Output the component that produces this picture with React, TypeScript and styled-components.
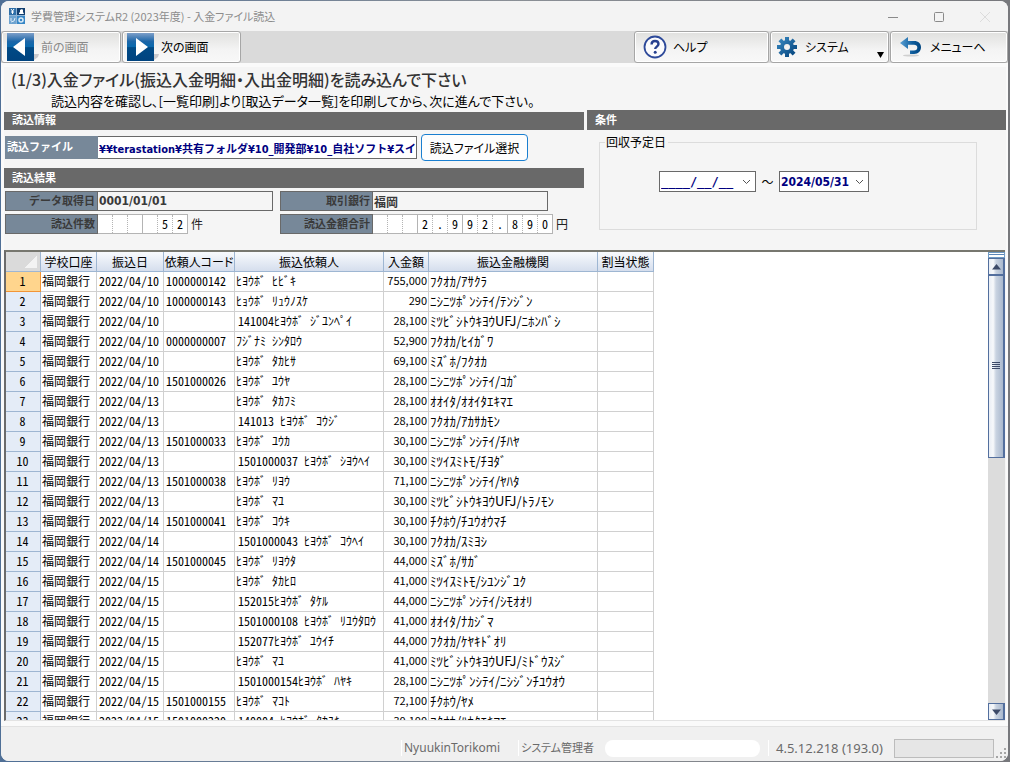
import React from "react";
import styled, { createGlobalStyle, css } from "styled-components";

const kana = `"Noto Sans CJK JP", sans-serif`;
const wide = `"DejaVu Sans Condensed", "Noto Sans CJK JP", sans-serif`;
const mono = `"DejaVu Sans Mono", monospace`;

const Global = createGlobalStyle`
  * { box-sizing: border-box; }
  body { margin: 0; background: #5f7393; font-family: ${kana}; font-size: 12px; color: #000; }
  button, input { font: inherit; color: inherit; margin: 0; }
  h1, h2, p { margin: 0; font-weight: 400; }
`;

const Frame = styled.div`
  height: 100vh;
  min-height: 480px;
  padding: 1px 2px 1px 1px;
  background: linear-gradient(90deg, #4f6f96, #8a8f96 50%, #77787c);
`;

const Window = styled.div`
  height: 100%;
  display: flex;
  flex-direction: column;
  overflow: hidden;
  border-radius: 8px;
  background: #fafafa;
`;

const TitleBar = styled.header`
  display: flex;
  align-items: center;
  height: 30px;
  flex: none;
  padding-left: 8px;
  background: #f3f3f3;
  color: #8c8c8c;
`;

const Caption = styled.h1`
  flex: 1;
  margin-left: 6px;
  font-size: 11px;
  line-height: 16px;
  font-feature-settings: "palt";
`;

const WindowButton = styled.button<{ $faint?: boolean }>`
  width: 46px;
  height: 30px;
  padding: 0;
  border: 0;
  background: none;
  color: ${(p) => (p.$faint ? "#dcdcdc" : "#8a8a8a")};
`;

const Toolbar = styled.nav`
  display: flex;
  gap: 1px;
  height: 32px;
  flex: none;
  background: #dadada;
`;

const ToolButton = styled.button<{ $width: number; $gap: number; $pad: number }>`
  display: flex;
  align-items: center;
  gap: ${(p) => p.$gap}px;
  width: ${(p) => p.$width}px;
  height: 32px;
  padding: 0 8px 0 ${(p) => p.$pad}px;
  border: 1px solid #a6a6a6;
  border-radius: 3px;
  box-shadow: inset 0 0 0 1px #fff;
  background: linear-gradient(#e0e0de, #f4f4f4 60%, #f8f8f8);
  font-size: 12px;
  line-height: 20px;
  font-feature-settings: "palt";
  white-space: nowrap;
  &:disabled { color: #8a8a8a; }
`;

const Spacer = styled.div`
  flex: 1;
`;

const DropMark = styled.svg`
  margin-left: auto;
  align-self: flex-end;
  margin-bottom: 4px;
  margin-right: -4px;
`;

const Page = styled.main`
  flex: 1;
  min-height: 0;
  display: flex;
  flex-direction: column;
  margin: 4px 2px 0 3px;
  background: #f5f5f5;
`;

const Heading = styled.h2`
  padding: 1px 0 0 7px;
  font-size: 16px;
  line-height: 23px;
  color: #333;
  font-weight: 500;
  font-feature-settings: "palt";
`;

const Lead = styled.p`
  padding-left: 47px;
  font-size: 13px;
  line-height: 19px;
  font-feature-settings: "palt";
`;

const Panels = styled.div`
  display: grid;
  grid-template-columns: 580px 1fr;
  gap: 3px;
  height: 140px;
  flex: none;
`;

const Left = styled.section`
  display: flex;
  flex-direction: column;
  padding-top: 2px;
`;

const Band = styled.h2<{ $tall?: boolean }>`
  height: ${(p) => (p.$tall ? 20 : 18)}px;
  padding-left: 8px;
  background: #696969;
  color: #fff;
  font-size: 11px;
  font-weight: 700;
  line-height: ${(p) => (p.$tall ? 18 : 14)}px;
`;

const FileRow = styled.div`
  display: flex;
  align-items: center;
  padding: 4px 1px 7px;
`;

const FileLabel = styled.label`
  width: 93px;
  height: 23px;
  padding-left: 2px;
  background: #778899;
  color: #fff;
  font-size: 11px;
  font-weight: 700;
  line-height: 20px;
`;

const FileInput = styled.input`
  width: 319px;
  height: 23px;
  padding: 0 1px;
  border: 1px solid #696969;
  border-left: 0;
  background: #fff;
  color: #000080;
  font-family: ${wide};
  font-size: 11px;
  font-weight: 700;
`;

const PickButton = styled.button`
  width: 107px;
  height: 27px;
  margin-left: 4px;
  padding: 0;
  border: 1px solid #1a7fd0;
  border-radius: 4px;
  background: #fdfdfd;
  font-size: 12px;
  font-feature-settings: "palt";
  white-space: nowrap;
`;

const Results = styled.div`
  display: grid;
  grid-template-columns: 275px 1fr;
  row-gap: 3px;
  padding: 3px 1px;
`;

const Result = styled.div`
  display: flex;
  height: 20px;
`;

const ResultLabel = styled.label`
  width: 93px;
  padding-right: 2px;
  border: 1px solid #696969;
  background: #778899;
  color: #3a3a3a;
  font-size: 11px;
  font-weight: 700;
  line-height: 16px;
  text-align: right;
`;

const ResultInput = styled.input`
  width: 175px;
  padding: 0 1px;
  border: 1px solid #696969;
  border-left: 0;
  background: #f5f5f5;
  color: #3a3a3a;
  font-family: ${wide};
  font-size: 12px;
  font-weight: 700;
`;

const Comb = styled.output`
  display: flex;
  border: solid #b4b4b4;
  border-width: 1px 1px 1px 0;
  background: #fff;
`;

const Digit = styled.span<{ $solid: boolean; $last: boolean }>`
  width: ${(p) => (p.$last ? 14 : 15)}px;
  border-right: ${(p) => (p.$last ? "0" : p.$solid ? "1px solid #b4b4b4" : "1px dotted #b4b4b4")};
  font-size: 12px;
  line-height: 17px;
  text-align: center;
  font-feature-settings: "hwid";
`;

const Unit = styled.span`
  margin-left: 3px;
  font-size: 12px;
  line-height: 19px;
  color: #222;
`;

const Dates = styled.fieldset`
  display: flex;
  align-items: center;
  height: 96px;
  margin: 4px 29px 0 12px;
  padding: 0 0 16px 59px;
  border: 1px solid #dcdcdc;
  legend {
    margin-left: -54px;
    padding: 0 2px 0 1px;
    font-size: 12px;
    line-height: 16px;
  }
`;

const Tilde = styled.span`
  width: 23px;
  text-align: center;
  font-size: 12px;
`;

const DateBox = styled.div<{ $width: number; $blank?: boolean }>`
  display: flex;
  width: ${(p) => p.$width}px;
  height: 21px;
  border: 1px solid #696969;
  background: #fff;
  input {
    flex: 1;
    min-width: 0;
    padding: 0 1px;
    border: 0;
    background: none;
    color: #000080;
    font-family: ${(p) => (p.$blank ? mono : wide)};
    font-size: 12px;
    font-weight: 700;
  }
  button {
    width: 18px;
    padding: 0;
    border: 0;
    background: none;
    line-height: 0;
  }
`;

const Sheet = styled.section`
  flex: 1;
  min-height: 0;
  display: flex;
  overflow: hidden;
  margin-right: 1px;
  border: solid #6b6b6b;
  border-width: 2px 0 0 2px;
  border-top-color: #77776f;
  border-bottom: 1px solid #e3e3e3;
  background: #fff;
`;

const TableBox = styled.div`
  flex: 1;
  min-width: 0;
  overflow: hidden;
`;

const Table = styled.table`
  width: 648px;
  table-layout: fixed;
  border-collapse: separate;
  border-spacing: 0;
  line-height: 17px;
`;

const edge = css`
  height: 20px;
  padding: 0 2px 2px 1px;
  border: solid #d0d0d0;
  border-width: 0 1px 1px 0;
  overflow: hidden;
  white-space: pre;
`;

const HeadCell = styled.th`
  ${edge}
  padding: 0;
  border-color: #9eb6d2;
  background: linear-gradient(#f8fafd, #d5deed);
  font-size: 12px;
  font-weight: 400;
  font-feature-settings: "palt";
`;

const Corner = styled(HeadCell)`
  background: linear-gradient(135deg, transparent 50%, #f3f3f3 50%) 18px 4px / 13px 12px no-repeat, #dadada;
`;

const RowHead = styled.th<{ $active: boolean }>`
  ${edge}
  border-color: ${(p) => (p.$active ? "#f29536" : "#9eb6d2")};
  background: ${(p) => (p.$active ? "#ffd58d" : "#e4ecf7")};
  font-size: 12px;
  font-weight: 400;
  font-feature-settings: "hwid";
`;

const Cell = styled.td`
  ${edge}
  font-size: 12px;
`;

const CodeCell = styled(Cell)`
  padding-left: 2px;
  font-feature-settings: "hwid";
`;

const NameCell = styled(Cell)<{ $indent: boolean }>`
  padding-left: ${(p) => (p.$indent ? 3 : 1)}px;
  font-feature-settings: "hwid";
`;

const AmountCell = styled(Cell)`
  padding-right: 1px;
  font-size: 11px;
  text-align: right;
`;

const BankCell = styled(Cell)`
  font-size: 13px;
`;

const Scroll = styled.div`
  width: 17px;
  flex: none;
  display: flex;
  flex-direction: column;
  background: #dcdcdc;
`;

const steel = css`
  flex: none;
  border: 1px solid #536f9e;
  border-right-width: 2px;
  background: linear-gradient(90deg, #e9eef5, #f7f9fb 30%, #c9d3e1 50%, #a9b8cd);
`;

const SplitGrip = styled.div`
  flex: none;
  height: 6px;
  border: 1px solid #6f9ac4;
  background: linear-gradient(#fff 1px, #5b86b8 1px 2px, #fff 2px);
`;

const ArrowButton = styled.button`
  ${steel}
  height: 17px;
  padding: 0;
  line-height: 0;
`;

const Thumb = styled.div`
  ${steel}
  display: flex;
  align-items: center;
  justify-content: center;
  height: 39%;
`;

const StatusBar = styled.footer`
  display: flex;
  align-items: center;
  height: 35px;
  flex: none;
  margin-top: 5px;
  padding-top: 8px;
  border-top: 1px solid #e2e2e2;
  background: #f0f0f0;
  color: #6a6a6a;
  font-family: "Noto Sans", "Noto Sans CJK JP", sans-serif;
  line-height: 16px;
  white-space: nowrap;
`;

const StatusItem = styled.span<{ $width: number; $size: number; $pad: number }>`
  width: ${(p) => p.$width}px;
  padding-left: ${(p) => p.$pad}px;
  border-left: 1px solid #fff;
  font-size: ${(p) => p.$size}px;
  font-feature-settings: "palt";
`;

const Blank = styled.span`
  width: 155px;
  height: 17px;
  margin-right: 8px;
  border-radius: 8px;
  background: #fff;
`;

const Progress = styled.div`
  width: 100px;
  height: 19px;
  border: 1px solid #bcbcbc;
  background: #e6e6e6;
`;

const Grip = styled.svg`
  align-self: flex-end;
  margin: 0 1px 2px 2px;
`;

const AppIcon = () => (
  <svg width="16" height="16" viewBox="0 0 16 16" aria-hidden="true">
    <path d="M0 0h7v7H0z" fill="#2f6fa8" />
    <path d="M8 0h8v7H8z" fill="#123f70" />
    <path d="M0 8h7v8H0z" fill="#6ea3d0" />
    <path d="M8 8h8v8H8z" fill="#3787c6" />
    <path d="M7 0h1v16H7zM0 7h16v1H0z" fill="#8db4d6" />
    <path d="M2 1l1.500 2L5 1M3.500 3v3M2 4h3" stroke="#fff" fill="none" />
    <path d="M10 6V5l1-1V2l2-1 1 1v2l1 2z" fill="#fff" />
    <path d="M2 14l3-1 1-3M2 10v3" stroke="#dcebf7" fill="none" />
    <circle cx="12" cy="12" r="2" fill="none" stroke="#dcebf7" strokeWidth="1.500" />
  </svg>
);

const NavIcon = ({ back }: { back?: boolean }) => (
  <svg width="32" height="28" viewBox="0 0 32 28" aria-hidden="true">
    <defs>
      <linearGradient id="nav" x1="0" y1="0" x2="0" y2="1">
        <stop offset="0" stopColor="#7d9fc9" />
        <stop offset="0.3" stopColor="#1c66a8" />
        <stop offset="0.5" stopColor="#0869ad" />
        <stop offset="0.52" stopColor="#004a86" />
        <stop offset="1" stopColor="#00437f" />
      </linearGradient>
    </defs>
    <path d="M27 21h5l-1 3-4 3z" fill="#c9c9cd" />
    <path d="M0 0h27v28H0z" fill="url(#nav)" />
    <path d={back ? "M6 14L18 5v18z" : "M21 14L9 5v18z"} fill="#fff" />
  </svg>
);

const HelpIcon = () => (
  <svg width="24" height="24" viewBox="0 0 24 24" fill="none" aria-hidden="true">
    <circle cx="12" cy="12" r="10.500" fill="#fbfbfd" stroke="#2e4a9a" strokeWidth="1.800" />
    <path d="M8.600 9.400C8.600 7 10 6 12 6s3.500 1.200 3.500 3.100c0 2.400-3.300 2.700-3.300 5" stroke="#27408f" strokeWidth="2.400" />
    <circle cx="12.200" cy="17.300" r="1.500" fill="#27408f" />
  </svg>
);

const GearIcon = () => (
  <svg width="20" height="20" viewBox="-10 -10 20 20" aria-hidden="true">
    <defs>
      <linearGradient id="gear" x1="0" y1="0" x2="1" y2="1">
        <stop offset="0" stopColor="#3b8cc4" />
        <stop offset="1" stopColor="#003f78" />
      </linearGradient>
      <mask id="teeth">
        {[0, 45, 90, 135].map((a) => (
          <rect key={a} x="-2" y="-10" width="4" height="20" fill="#fff" transform={`rotate(${a})`} />
        ))}
        <circle r="7" fill="#fff" />
        <circle r="3" fill="#000" />
      </mask>
    </defs>
    <rect x="-10" y="-10" width="20" height="20" fill="url(#gear)" mask="url(#teeth)" />
  </svg>
);

const ReturnIcon = () => (
  <svg width="22" height="20" viewBox="0 0 22 20" aria-hidden="true">
    <defs>
      <linearGradient id="ret">
        <stop offset="0" stopColor="#5aa0d4" />
        <stop offset="0.6" stopColor="#0d5c9c" />
        <stop offset="1" stopColor="#004580" />
      </linearGradient>
    </defs>
    <ellipse cx="11" cy="18.500" rx="8" ry="1" fill="#d0d0d0" />
    <path d="M0 6L8 0v4h6c4.500 0 7 2.600 7 6.300S18.500 17 14 17h-4v-3.500h4c2.200 0 3.300-1.200 3.300-3S16 7.800 14 7.800H8V12z" fill="url(#ret)" />
  </svg>
);

const Chevron = () => (
  <svg width="9" height="6" viewBox="0 0 9 6" aria-hidden="true">
    <path d="M1 1l3.500 3.500L8 1" fill="none" stroke="#555" />
  </svg>
);

const Triangle = ({ up }: { up?: boolean }) => (
  <svg width="9" height="6" viewBox="0 0 9 6" aria-hidden="true">
    <path d={up ? "M0 5.500L4.500 0 9 5.500z" : "M0 .5L4.500 6 9 .5z"} fill="#3c4a68" />
  </svg>
);

const columns = [56, 67, 71, 149, 45, 169, 56];
const headers = ["学校口座", "振込日", "依頼人コード", "振込依頼人", "入金額", "振込金融機関", "割当状態"];

const rows: [string, string, string, string, string][] = [
  ["04/10", "1000000142", "ﾋﾖｳﾎﾞ ﾋﾋﾞｷ", "755,000", "ﾌｸｵｶ/ｱｻｸﾗ"],
  ["04/10", "1000000143", "ﾋｮｳﾎﾞ ﾘｭｳﾉｽｹ", "290", "ﾆｼﾆﾂﾎﾟﾝｼﾃｲ/ﾃﾝｼﾞﾝ"],
  ["04/10", "", "141004ﾋﾖｳﾎﾞ ｼﾞﾕﾝﾍﾟｲ", "28,100", "ﾐﾂﾋﾞｼﾄｳｷﾖｳUFJ/ﾆﾎﾝﾊﾞｼ"],
  ["04/10", "0000000007", "ﾌｼﾞﾅﾐ ｼﾝﾀﾛｳ", "52,900", "ﾌｸｵｶ/ﾋｲｶﾞﾜ"],
  ["04/10", "", "ﾋﾖｳﾎﾞ ﾀｶﾋｻ", "69,100", "ﾐｽﾞﾎ/ﾌｸｵｶ"],
  ["04/10", "1501000026", "ﾋﾖｳﾎﾞ ﾕｳﾔ", "28,100", "ﾆｼﾆﾂﾎﾟﾝｼﾃｲ/ｺｶﾞ"],
  ["04/13", "", "ﾋﾖｳﾎﾞ ﾀｶﾌﾐ", "28,100", "ｵｵｲﾀ/ｵｵｲﾀｴｷﾏｴ"],
  ["04/13", "", "141013 ﾋﾖｳﾎﾞ ｺｳｼﾞ", "28,100", "ﾌｸｵｶ/ｱｶｻｶﾓﾝ"],
  ["04/13", "1501000033", "ﾋﾖｳﾎﾞ ﾕｳｶ", "30,100", "ﾆｼﾆﾂﾎﾟﾝｼﾃｲ/ﾁﾊﾔ"],
  ["04/13", "", "1501000037 ﾋﾖｳﾎﾞ ｼﾖｳﾍｲ", "30,100", "ﾐﾂｲｽﾐﾄﾓ/ﾁﾖﾀﾞ"],
  ["04/13", "1501000038", "ﾋﾖｳﾎﾞ ﾘﾖｳ", "71,100", "ﾆｼﾆﾂﾎﾟﾝｼﾃｲ/ﾔﾊﾀ"],
  ["04/13", "", "ﾋﾖｳﾎﾞ ﾏﾕ", "30,100", "ﾐﾂﾋﾞｼﾄｳｷﾖｳUFJ/ﾄﾗﾉﾓﾝ"],
  ["04/14", "1501000041", "ﾋﾖｳﾎﾞ ｺｳｷ", "30,100", "ﾁｸﾎｳ/ﾁﾕｳｵｳﾏﾁ"],
  ["04/14", "", "1501000043 ﾋﾖｳﾎﾞ ｺｳﾍｲ", "30,100", "ﾌｸｵｶ/ｽﾐﾖｼ"],
  ["04/14", "1501000045", "ﾋﾖｳﾎﾞ ﾘﾖｳﾀ", "44,000", "ﾐｽﾞﾎ/ｻｶﾞ"],
  ["04/15", "", "ﾋﾖｳﾎﾞ ﾀｶﾋﾛ", "41,000", "ﾐﾂｲｽﾐﾄﾓ/ｼﾕﾝｼﾞﾕｸ"],
  ["04/15", "", "152015ﾋﾖｳﾎﾞ ﾀｹﾙ", "44,000", "ﾆｼﾆﾂﾎﾟﾝｼﾃｲ/ｼﾓｵｵﾘ"],
  ["04/15", "", "1501000108 ﾋﾖｳﾎﾞ ﾘﾕｳﾀﾛｳ", "41,000", "ｵｵｲﾀ/ﾅｶｼﾞﾏ"],
  ["04/15", "", "152077ﾋﾖｳﾎﾞ ﾕｳｲﾁ", "44,000", "ﾌｸｵｶ/ｹﾔｷﾄﾞｵﾘ"],
  ["04/15", "", "ﾋﾖｳﾎﾞ ﾏﾕ", "41,000", "ﾐﾂﾋﾞｼﾄｳｷﾖｳUFJ/ﾐﾄﾞｳｽｼﾞ"],
  ["04/15", "", "1501000154ﾋﾖｳﾎﾞ ﾊﾔｷ", "28,100", "ﾆｼﾆﾂﾎﾟﾝｼﾃｲ/ﾆｼｼﾞﾝﾁﾕｳｵｳ"],
  ["04/15", "1501000155", "ﾋﾖｳﾎﾞ ﾏｺﾄ", "72,100", "ﾁｸﾎｳ/ﾔﾒ"],
  ["04/15", "1501000220", "140004 ﾋﾖｳﾎﾞ ﾀｶﾕｷ", "30,100", "ﾌｸｵｶ/ﾊｶﾀｴｷﾏｴ"],
];

const DigitField = ({ id, text }: { id: string; text: string }) => (
  <Comb id={id}>
    {text.split("").map((c, i) => (
      <Digit key={i} $solid={i % 3 === 2} $last={i === text.length - 1}>
        {c}
      </Digit>
    ))}
  </Comb>
);

export default function App() {
  return (
    <>
      <Global />
      <Frame lang="ja">
        <Window>
          <TitleBar>
            <AppIcon />
            <Caption>学費管理システムR2 (2023年度) - 入金ファイル読込</Caption>
            <WindowButton aria-label="最小化">
              <svg width="10" height="10"><path d="M0 5.500h10" stroke="currentColor" /></svg>
            </WindowButton>
            <WindowButton aria-label="最大化">
              <svg width="10" height="10"><rect x=".5" y=".5" width="9" height="9" rx="1" fill="none" stroke="currentColor" /></svg>
            </WindowButton>
            <WindowButton aria-label="閉じる" $faint>
              <svg width="10" height="10"><path d="M0 0l10 10M10 0L0 10" stroke="currentColor" /></svg>
            </WindowButton>
          </TitleBar>

          <Toolbar>
            <ToolButton $width={120} $gap={2} $pad={5} disabled>
              <NavIcon back />前の画面
            </ToolButton>
            <ToolButton $width={119} $gap={2} $pad={4}>
              <NavIcon />次の画面
            </ToolButton>
            <Spacer />
            <ToolButton $width={135} $gap={6} $pad={8}>
              <HelpIcon />ヘルプ
            </ToolButton>
            <ToolButton $width={119} $gap={8} $pad={6}>
              <GearIcon />システム
              <DropMark width="7" height="6" viewBox="0 0 7 6" aria-hidden="true"><path d="M0 0h7L3.500 6z" /></DropMark>
            </ToolButton>
            <ToolButton $width={118} $gap={8} $pad={9}>
              <ReturnIcon />メニューへ
            </ToolButton>
          </Toolbar>

          <Page>
            <Heading>(1/3)入金ファイル(振込入金明細・入出金明細)を読み込んで下さい</Heading>
            <Lead>読込内容を確認し、[一覧印刷]より[取込データ一覧]を印刷してから、次に進んで下さい。</Lead>

            <Panels>
              <Left>
                <Band>読込情報</Band>
                <FileRow>
                  <FileLabel htmlFor="file">読込ファイル</FileLabel>
                  <FileInput id="file" defaultValue="¥¥terastation¥共有フォルダ¥10_開発部¥10_自社ソフト¥スイ" />
                  <PickButton>読込ファイル選択</PickButton>
                </FileRow>
                <Band $tall>読込結果</Band>
                <Results>
                  <Result>
                    <ResultLabel htmlFor="taken">データ取得日</ResultLabel>
                    <ResultInput id="taken" readOnly value="0001/01/01" />
                  </Result>
                  <Result>
                    <ResultLabel htmlFor="bank">取引銀行</ResultLabel>
                    <ResultInput id="bank" readOnly value="福岡" />
                  </Result>
                  <Result>
                    <ResultLabel htmlFor="count">読込件数</ResultLabel>
                    <DigitField id="count" text="    52" />
                    <Unit>件</Unit>
                  </Result>
                  <Result>
                    <ResultLabel htmlFor="total">読込金額合計</ResultLabel>
                    <DigitField id="total" text="   2.992.890" />
                    <Unit>円</Unit>
                  </Result>
                </Results>
              </Left>
              <section>
                <Band $tall>条件</Band>
                <Dates>
                  <legend>回収予定日</legend>
                  <DateBox $width={97} $blank>
                    <input aria-label="開始日" defaultValue="____/__/__" />
                    <button aria-label="開始日を選択"><Chevron /></button>
                  </DateBox>
                  <Tilde>～</Tilde>
                  <DateBox $width={90}>
                    <input aria-label="終了日" defaultValue="2024/05/31" />
                    <button aria-label="終了日を選択"><Chevron /></button>
                  </DateBox>
                </Dates>
              </section>
            </Panels>

            <Sheet>
              <TableBox>
                <Table>
                  <colgroup>
                    <col width={35} />
                    {columns.map((w, i) => <col key={i} width={w} />)}
                  </colgroup>
                  <thead>
                    <tr>
                      <Corner aria-label="行" />
                      {headers.map((h) => <HeadCell key={h}>{h}</HeadCell>)}
                    </tr>
                  </thead>
                  <tbody>
                    {rows.map(([day, code, name, amount, bank], i) => (
                      <tr key={i}>
                        <RowHead scope="row" $active={i === 0}>{i + 1}</RowHead>
                        <Cell>福岡銀行</Cell>
                        <CodeCell>2022/{day}</CodeCell>
                        <CodeCell>{code}</CodeCell>
                        <NameCell $indent={/^\d/.test(name)}>{name}</NameCell>
                        <AmountCell>{amount}</AmountCell>
                        <BankCell>{bank}</BankCell>
                        <Cell />
                      </tr>
                    ))}
                  </tbody>
                </Table>
              </TableBox>
              <Scroll>
                <SplitGrip />
                <ArrowButton aria-label="上へ"><Triangle up /></ArrowButton>
                <Thumb>
                  <svg width="8" height="8" aria-hidden="true"><path d="M0 .5h8M0 2.500h8M0 4.500h8M0 6.500h8" stroke="#3c4a68" /></svg>
                </Thumb>
                <Spacer />
                <ArrowButton aria-label="下へ"><Triangle /></ArrowButton>
              </Scroll>
            </Sheet>
          </Page>

          <StatusBar>
            <Spacer />
            <StatusItem $width={117} $size={12} $pad={2}>NyuukinTorikomi</StatusItem>
            <StatusItem $width={87} $size={11} $pad={2}>システム管理者</StatusItem>
            <Blank />
            <StatusItem $width={126} $size={13} $pad={7}>4.5.12.218 (193.0)</StatusItem>
            <Progress role="progressbar" aria-label="進捗" aria-valuenow={0} />
            <Grip width="11" height="11" aria-hidden="true">
              <path d="M8 0h2v2H8zM4 4h2v2H4zM8 4h2v2H8zM0 8h2v2H0zM4 8h2v2H4zM8 8h2v2H8z" fill="#a5a5a5" />
            </Grip>
          </StatusBar>
        </Window>
      </Frame>
    </>
  );
}
